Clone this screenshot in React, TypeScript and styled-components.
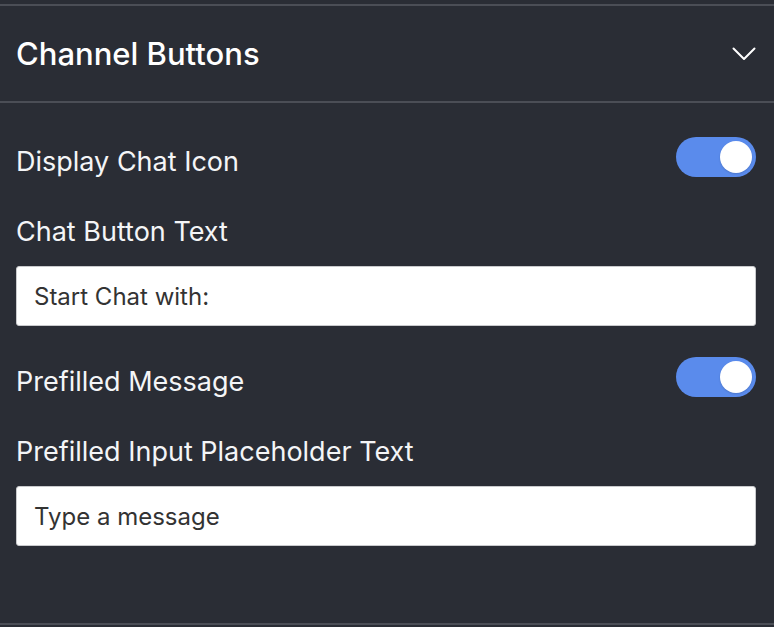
import React, { useState } from 'react';
import styled, { createGlobalStyle } from 'styled-components';

const GlobalStyle = createGlobalStyle`
  html, body {
    margin: 0;
    padding: 0;
    background: #2a2d35;
  }
  body {
    font-family: Inter, "Open Sans", "Liberation Sans", sans-serif;
    -webkit-font-smoothing: antialiased;
  }
`;

const Page = styled.div`
  padding-top: 4px;
  width: 774px;
  height: 627px;
  box-sizing: border-box;
  overflow: hidden;
`;

const Section = styled.section`
  border-top: 2px solid #4b4e56;
  border-bottom: 2px solid #4b4e56;
`;

const Header = styled.div`
  display: flex;
  align-items: center;
  justify-content: space-between;
  height: 95px;
  padding: 0 18px 0 16px;
  border-bottom: 2px solid #4b4e56;
`;

const Title = styled.h2`
  margin: 0;
  font-size: 31px;
  font-weight: 500;
  color: #ffffff;
  letter-spacing: 0;
`;

const Body = styled.div`
  padding: 34px 18px 77px 16px;
`;

const ToggleRow = styled.div<{ $first?: boolean }>`
  display: flex;
  align-items: center;
  justify-content: space-between;
  height: 40px;
  margin-top: ${(p) => (p.$first ? 0 : 31)}px;
`;

const Label = styled.label<{ $inRow?: boolean }>`
  display: block;
  font-size: 27px;
  line-height: 34px;
  color: #f4f5f7;
  margin: ${(p) => (p.$inRow ? '10px 0 0 0' : '38px 0 17px 0')};
`;

const Switch = styled.button<{ $on: boolean }>`
  position: relative;
  width: 80px;
  height: 40px;
  border: none;
  border-radius: 20px;
  padding: 0;
  background: ${(p) => (p.$on ? '#5a8bec' : '#6b6e76')};
  cursor: pointer;
`;

const Knob = styled.span<{ $on: boolean }>`
  position: absolute;
  top: 4px;
  left: ${(p) => (p.$on ? 44 : 4)}px;
  width: 32px;
  height: 32px;
  border-radius: 50%;
  background: #ffffff;
  box-shadow: 0 1px 2px rgba(0, 0, 0, 0.15);
`;

const TextInput = styled.input`
  display: block;
  width: 100%;
  height: 60px;
  box-sizing: border-box;
  border: 1px solid #c9cacd;
  border-radius: 3px;
  background: #ffffff;
  padding: 0 17px;
  font-family: Inter, "Open Sans", "Liberation Sans", sans-serif;
  font-size: 24px;
  color: #333333;
  outline: none;
`;

function Chevron() {
  return (
    <svg width="24" height="14" viewBox="0 0 24 14" fill="none">
      <polyline points="1.5,1.5 12,12 22.5,1.5" stroke="#ffffff" strokeWidth="2" strokeLinecap="round" strokeLinejoin="round" />
    </svg>
  );
}

function Toggle({ on, onClick }: { on: boolean; onClick: () => void }) {
  return (
    <Switch $on={on} onClick={onClick} aria-pressed={on}>
      <Knob $on={on} />
    </Switch>
  );
}

export default function App() {
  const [chatIcon, setChatIcon] = useState(true);
  const [prefilled, setPrefilled] = useState(true);
  const [buttonText, setButtonText] = useState('Start Chat with:');
  const [placeholder, setPlaceholder] = useState('Type a message');

  return (
    <Page>
      <GlobalStyle />
      <Section>
        <Header>
          <Title>Channel Buttons</Title>
          <Chevron />
        </Header>
        <Body>
          <ToggleRow $first>
            <Label $inRow>Display Chat Icon</Label>
            <Toggle on={chatIcon} onClick={() => setChatIcon(!chatIcon)} />
          </ToggleRow>
          <Label>Chat Button Text</Label>
          <TextInput value={buttonText} onChange={(e) => setButtonText(e.target.value)} />

          <ToggleRow>
            <Label $inRow>Prefilled Message</Label>
            <Toggle on={prefilled} onClick={() => setPrefilled(!prefilled)} />
          </ToggleRow>
          <Label>Prefilled Input Placeholder Text</Label>
          <TextInput value={placeholder} onChange={(e) => setPlaceholder(e.target.value)} />
        </Body>
      </Section>
    </Page>
  );
}
